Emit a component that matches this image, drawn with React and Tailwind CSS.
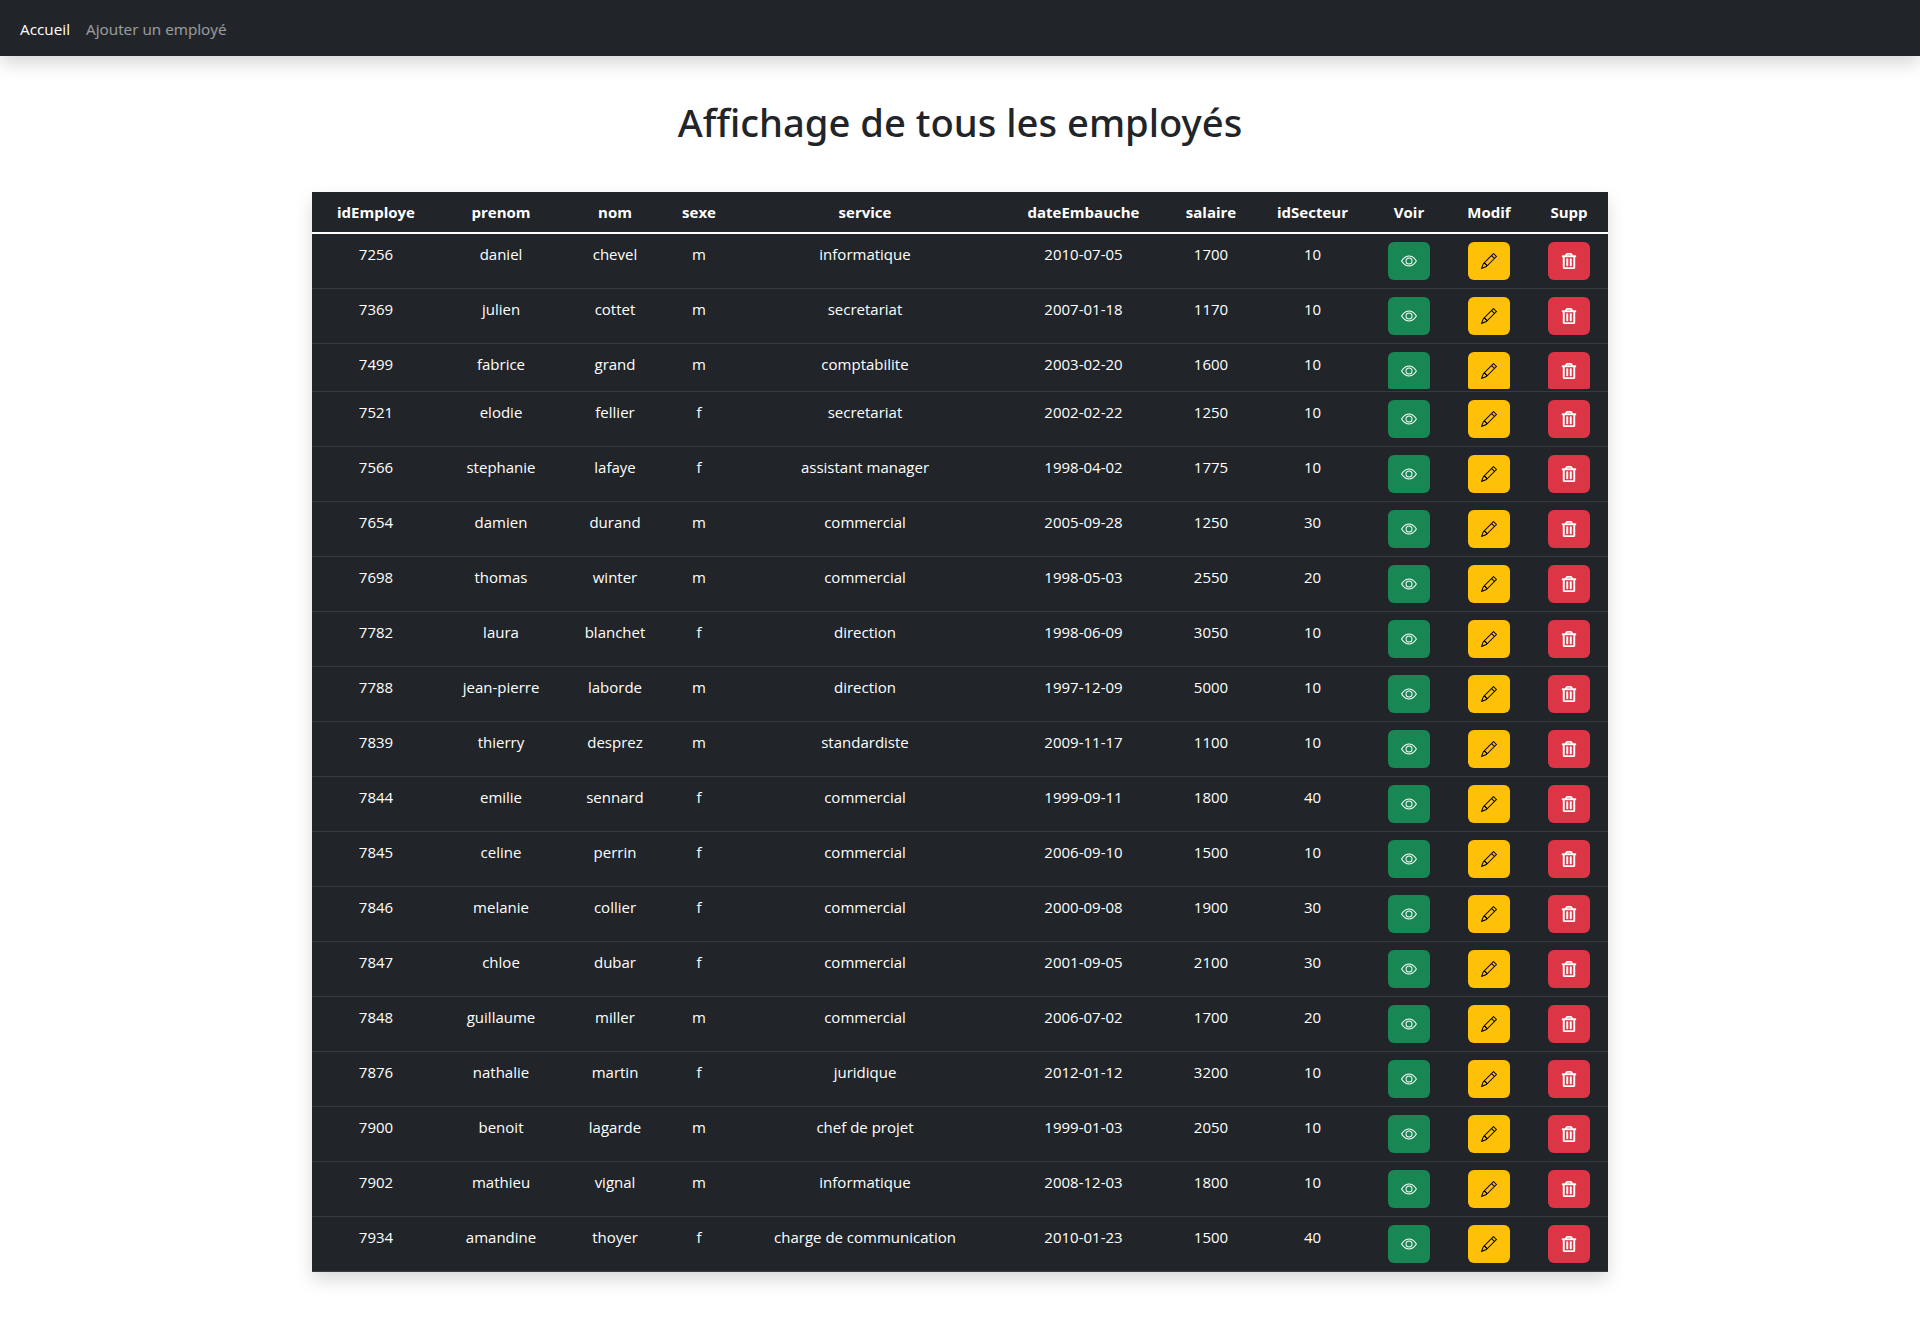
import { FaRegTrashAlt } from "react-icons/fa";

const rows = [
  ["7256","daniel","chevel","m","informatique","2010-07-05","1700","10"],
  ["7369","julien","cottet","m","secretariat","2007-01-18","1170","10"],
  ["7499","fabrice","grand","m","comptabilite","2003-02-20","1600","10"],
  ["7521","elodie","fellier","f","secretariat","2002-02-22","1250","10"],
  ["7566","stephanie","lafaye","f","assistant manager","1998-04-02","1775","10"],
  ["7654","damien","durand","m","commercial","2005-09-28","1250","30"],
  ["7698","thomas","winter","m","commercial","1998-05-03","2550","20"],
  ["7782","laura","blanchet","f","direction","1998-06-09","3050","10"],
  ["7788","jean-pierre","laborde","m","direction","1997-12-09","5000","10"],
  ["7839","thierry","desprez","m","standardiste","2009-11-17","1100","10"],
  ["7844","emilie","sennard","f","commercial","1999-09-11","1800","40"],
  ["7845","celine","perrin","f","commercial","2006-09-10","1500","10"],
  ["7846","melanie","collier","f","commercial","2000-09-08","1900","30"],
  ["7847","chloe","dubar","f","commercial","2001-09-05","2100","30"],
  ["7848","guillaume","miller","m","commercial","2006-07-02","1700","20"],
  ["7876","nathalie","martin","f","juridique","2012-01-12","3200","10"],
  ["7900","benoit","lagarde","m","chef de projet","1999-01-03","2050","10"],
  ["7902","mathieu","vignal","m","informatique","2008-12-03","1800","10"],
  ["7934","amandine","thoyer","f","charge de communication","2010-01-23","1500","40"],
];
const heads = ["idEmploye","prenom","nom","sexe","service","dateEmbauche","salaire","idSecteur","Voir","Modif","Supp"];
const widths = [128,122,106,62,270,167,88,115,78,82,78];

const Eye = () => (
  <svg width="16" height="16" viewBox="0 0 16 16" fill="currentColor">
    <path d="M16 8s-3-5.5-8-5.5S0 8 0 8s3 5.5 8 5.5S16 8 16 8zM1.173 8a13.133 13.133 0 0 1 1.66-2.043C4.12 4.668 5.88 3.5 8 3.5c2.12 0 3.879 1.168 5.168 2.457A13.133 13.133 0 0 1 14.828 8c-.058.087-.122.183-.195.288-.335.48-.83 1.12-1.465 1.755C11.879 11.332 10.119 12.5 8 12.5c-2.12 0-3.879-1.168-5.168-2.457A13.134 13.134 0 0 1 1.172 8z"/>
    <path d="M8 5.5a2.5 2.5 0 1 0 0 5 2.5 2.5 0 0 0 0-5zM4.5 8a3.5 3.5 0 1 1 7 0 3.5 3.5 0 0 1-7 0z"/>
  </svg>
);
const Pencil = () => (
  <svg width="16" height="16" viewBox="0 0 16 16" fill="currentColor">
    <path d="M12.146.146a.5.5 0 0 1 .708 0l3 3a.5.5 0 0 1 0 .708l-10 10a.5.5 0 0 1-.168.11l-5 2a.5.5 0 0 1-.65-.65l2-5a.5.5 0 0 1 .11-.168l10-10zM11.207 2.5 13.5 4.793 14.793 3.5 12.5 1.207 11.207 2.5zm1.586 3L10.5 3.207 4 9.707V10h.5a.5.5 0 0 1 .5.5v.5h.5a.5.5 0 0 1 .5.5v.5h.293l6.5-6.5zm-9.761 5.175-.106.106-1.528 3.821 3.821-1.528.106-.106A.5.5 0 0 1 5 12.5V12h-.5a.5.5 0 0 1-.5-.5V11h-.5a.5.5 0 0 1-.468-.325z"/>
  </svg>
);

const font = "font-['Open_Sans','Noto_Sans',sans-serif]";

function Btn({ clipped, color, children }) {
  return (
    <div className={clipped
      ? `mx-auto mb-[2px] flex h-[37px] w-[42px] items-center justify-center overflow-hidden rounded-t-md rounded-b-[2px] ${color}`
      : `mx-auto flex h-[38px] w-[42px] items-center justify-center rounded-md ${color}`}>
      {children}
    </div>
  );
}

export default function App() {
  return (
    <div className={`${font} min-h-[1327px] bg-white text-[#212529] text-base`}>
      <nav className="flex h-14 items-center gap-4 bg-[#212529] pt-[2px] pl-5 text-[15.3px] shadow-[0_8px_16px_rgba(0,0,0,0.15)]">
        <a className="text-white">Accueil</a>
        <a className="text-white/55">Ajouter un employé</a>
      </nav>
      <h1 className="mt-[42px] mb-[46px] text-center font-['Noto_Sans',sans-serif] text-[38.2px] leading-[48px] font-medium">Affichage de tous les employés</h1>
      <div className="mx-auto w-[1296px] shadow-[0_8px_16px_rgba(0,0,0,0.15)]">
        <table className="w-full table-fixed border-collapse bg-[#212529] text-center text-[15px] leading-6 text-white">
          <colgroup>
            {widths.map((w, i) => <col key={i} style={{ width: w }} />)}
          </colgroup>
          <thead>
            <tr className="border-b-2 border-white">
              {heads.map(h => <th key={h} className="p-2 font-bold">{h}</th>)}
            </tr>
          </thead>
          <tbody>
            {rows.map((r, i) => {
              const clipped = i === 2;
              const cell = clipped ? "px-2 pt-2 pb-0 align-top" : "p-2 align-top";
              return (
                <tr key={r[0]} className="border-b border-[#373b3e]">
                  {r.map((c, j) => <td key={j} className={cell}>{c}</td>)}
                  <td className={cell}><Btn clipped={clipped} color="bg-[#198754] text-white"><Eye /></Btn></td>
                  <td className={cell}><Btn clipped={clipped} color="bg-[#ffc107] text-black"><Pencil /></Btn></td>
                  <td className={cell}><Btn clipped={clipped} color="bg-[#dc3545] text-white"><FaRegTrashAlt size={16} stroke="currentColor" strokeWidth={14} /></Btn></td>
                </tr>
              );
            })}
          </tbody>
        </table>
      </div>
    </div>
  );
}
